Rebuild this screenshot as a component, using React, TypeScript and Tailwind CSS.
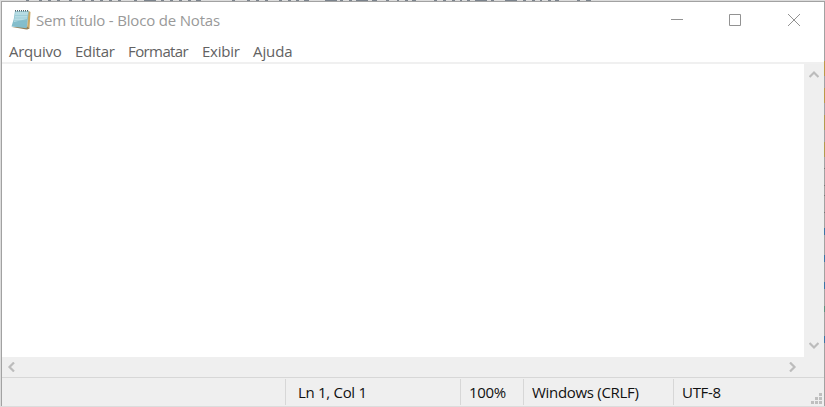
import React from "react";

const marks = [
  [26, 3], [39, 3], [48, 3], [57, 3], [69, 3], [82, 3], [91, 3], [100, 3], [109, 3], [118, 3], [134, 3], [144, 12], [161, 3], [170, 3], [179, 3], [188, 3], [196, 5], [232, 3], [247, 3], [256, 3], [265, 3], [279, 3], [288, 3], [296, 3],
  [304, 5], [325, 12], [340, 3], [349, 3], [356, 12], [372, 5], [386, 3], [397, 2], [405, 3], [412, 4], [434, 3], [443, 3], [452, 3], [460, 2], [467, 3], [475, 12], [491, 3], [505, 12], [523, 3], [532, 3], [540, 2], [548, 3], [555, 4], [577, 3], [586, 5],
];

const edge = [
  [61, 15, "#b99a4a"], [88, 15, "#b99a4a"], [115, 15, "#b09c50"], [142, 15, "#b09c50"],
  [168, 1, "#777777"], [185, 1, "#777777"], [195, 1, "#777777"], [212, 1, "#777777"],
  [228, 7, "#3b76a5"], [255, 7, "#3b76a5"], [282, 7, "#3b76a5"], [306, 6, "#5d927e"], [336, 7, "#3b76a5"],
] as const;

function NotepadIcon() {
  return (
    <svg className="h-[22px] w-5 shrink-0" viewBox="0 0 20 22">
      <path d="M17 1.5 L19.5 3 L18.5 19.5 L16 20.5 Z" fill="#c9a968" />
      <path d="M1 18 L15.5 20.6 L18.5 19.5 L16 17.5 Z" fill="#967f57" />
      <path d="M4 2 H17.8 L15.7 19.3 L.5 17.5 Q3.2 11 4 2 Z" fill="#83bdcb" />
      <path d="M4.5 2.5 H17.3 L16 10 L2.8 13 Z" fill="#b6dce3" />
      <path d="M4 6.5 H16.8 M3.5 9 H16.5 M3 11.5 H16 M2.2 14 H15.8" stroke="#88c0cd" strokeWidth=".5" />
      <path d="M4 1.8 H17.5" stroke="#54666b" strokeWidth="1.6" strokeDasharray="1 1" />
    </svg>
  );
}

function Chevron({ d, className }: { d: string; className: string }) {
  return (
    <svg className={className} viewBox="0 0 10 10" fill="none" stroke="#bcbcbc" strokeWidth="2.2">
      <path d={d} />
    </svg>
  );
}

export default function App() {
  return (
    <div className="relative flex h-[407px] w-[825px] flex-col overflow-hidden bg-[#dcdcdc] pt-px pl-px font-['Open_Sans',sans-serif] text-[15px]">
      <svg className="absolute top-0 left-0 h-px w-full" viewBox="0 0 825 1" preserveAspectRatio="none">
        {marks.map(([x, w]) => <rect key={x} x={x} y="0" width={w} height="1" fill="#7b838c" />)}
      </svg>
      <div className="flex h-[405px] w-[824px] flex-col border border-[#a2a2a2] bg-white">
        <header className="flex h-9 shrink-0 items-center pl-[9px]">
          <NotepadIcon />
          <span className="ml-[5px] w-[190px] shrink-0 whitespace-nowrap pt-px text-[#999] tracking-[-0.18px]">Sem título - Bloco de Notas</span>
          <svg className="ml-[443px] h-[14px] w-[132px] shrink-0" viewBox="0 0 132 14" fill="none" stroke="#929292">
            <path d="M2 6.5 H14 M60.5 1.5 h11 v11 h-11 Z" />
            <path d="M119 1 L131 13 M131 1 L119 13" />
          </svg>
        </header>
        <nav className="flex h-[26px] shrink-0 items-center border-b-2 border-[#f0f0f0] pt-[3px] pl-[7px] text-[#626262] tracking-[-0.25px]">
          <span className="w-[66px]">Arquivo</span>
          <span className="w-[53px]">Editar</span>
          <span className="w-[74px] tracking-[-0.6px]">Formatar</span>
          <span className="w-[51px]">Exibir</span>
          <span className="tracking-[-0.1px]">Ajuda</span>
        </nav>
        <main className="flex h-[293px] shrink-0">
          <div className="w-[802px] bg-white" />
          <div className="flex flex-1 flex-col items-center justify-between bg-[#efefef] pt-1.5 pr-px pb-[7px]">
            <Chevron className="size-2.5" d="M.5 7 L5 2.5 L9.5 7" />
            <Chevron className="size-2.5" d="M.5 3 L5 7.5 L9.5 3" />
          </div>
        </main>
        <div className="flex h-5 shrink-0 items-center justify-between bg-[#efefef] pr-[27px] pb-px pl-[5px]">
          <Chevron className="size-2.5" d="M7 .5 L2.5 5 L7 9.5" />
          <Chevron className="size-2.5" d="M3 .5 L7.5 5 L3 9.5" />
        </div>
        <footer className="flex flex-1 border-t border-[#d7d7d7] bg-[#efefef] pt-px pb-px text-[#111] leading-[26px] tracking-[-0.3px]">
          <span className="w-[283px]" />
          <span className="w-[175px] border-l border-[#d7d7d7] pl-3">Ln 1, Col 1</span>
          <span className="w-[63px] border-l border-[#d7d7d7] pl-2">100%</span>
          <span className="w-[150px] border-l border-[#d7d7d7] pl-2">Windows (CRLF)</span>
          <span className="flex-1 border-l border-[#d7d7d7] pl-2">UTF-8</span>
          <svg className="mt-auto h-[12px] w-[13px]" viewBox="0 0 13 12" fill="#bfbfbf">
            <path d="M8 0h3v3H8zM4 4h3v3H4zM8 4h3v3H8zM0 8h3v3H0zM4 8h3v3H4zM8 8h3v3H8z" />
          </svg>
        </footer>
      </div>
      <svg className="absolute top-0 right-0 h-full w-px" viewBox="0 0 1 407" preserveAspectRatio="none">
        {edge.map(([y, h, c]) => <rect key={y} x="0" y={y} width="1" height={h} fill={c} />)}
      </svg>
    </div>
  );
}
